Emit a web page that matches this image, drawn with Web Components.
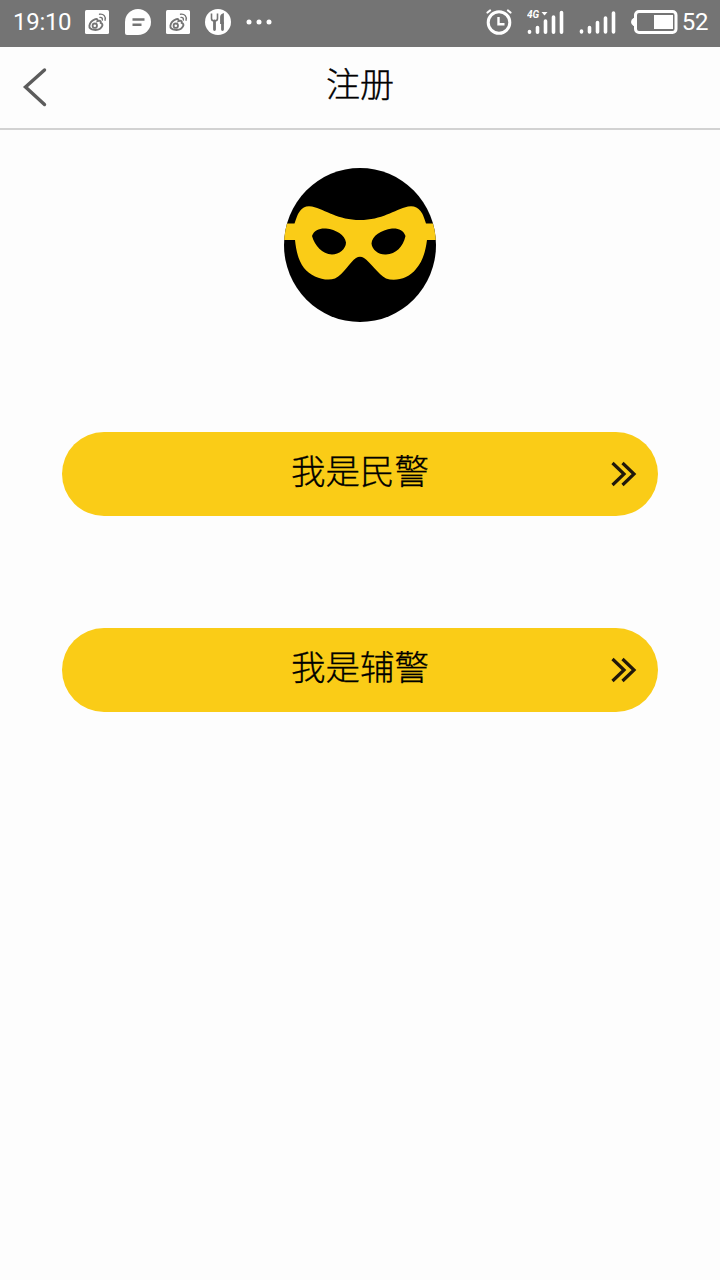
<!DOCTYPE html>
<html lang="zh-CN">
<head>
<meta charset="UTF-8">
<title>注册</title>
<style>
  body {
    margin: 0;
    background: #fdfdfd;
    color: #000;
    font-family: Roboto, "Noto Sans CJK SC", sans-serif;
  }
</style>
</head>
<body>
<register-page>
  <status-bar slot="status" time="19:10" battery="52"></status-bar>
  <nav-header slot="header">注册</nav-header>
  <mask-logo></mask-logo>
  <role-button>我是民警</role-button>
  <role-button>我是辅警</role-button>
</register-page>

<script>
class StatusBar extends HTMLElement {
  connectedCallback() {
    const weibo = `
      <svg class="weibo" width="24" height="24" viewBox="0 0 24 24">
        <rect width="24" height="24" rx="1.5" fill="#fff"/>
        <g fill="none" stroke="#747474">
          <path stroke-width="1.900" d="M9.800 9.300c1.800-.7 3.200-.3 2.600 1.900 2.200-.9 3.900-.2 3.300 1.600 1.800.8 2 2 1.500 3.100-1.200 2.800-4.700 4.300-8 4-3.200-.3-5.200-1.900-4.800-4.300.4-2.400 2.700-5.200 5.400-6.300z"/>
          <circle cx="9.800" cy="15.700" r="2.200" stroke-width="1.800"/>
          <path stroke-width="1.400" stroke-linecap="round" d="M14.500 4.200c4.200-.7 6.600 2.500 5.500 6M15 7.400c1.900-.2 2.700 1 2.300 2.600"/>
        </g>
      </svg>`;
    const shadow = this.attachShadow({ mode: 'open' });
    shadow.innerHTML = `
      <style>
        :host {
          display: flex;
          justify-content: space-between;
          box-sizing: border-box;
          height: 47px;
          padding: 0 12px 3px 13px;
          background: #747474;
          color: #fff;
          font: 24px/44px Roboto, sans-serif;
        }
        div { display: flex; align-items: center; }
        svg { display: block; flex: none; }
        .time { width: 72px; letter-spacing: -.3px; }
        .left svg { margin-right: 15px; }
        .left .weibo { margin-right: 16px; }
        .left .weibo ~ .weibo { margin-right: 15px; }
        .clock { margin-right: 14px; }
        .sim { margin-right: 15px; }
        .battery { margin-right: 4px; }
        .level { letter-spacing: -.4px; }
      </style>
      <div class="left">
        <span class="time">${this.getAttribute('time')}</span>
        ${weibo}
        <svg width="26" height="26" viewBox="0 0 26 26">
          <path fill="#fff" d="M13 0a13 13 0 0 1 0 26H2a2 2 0 0 1-2-2V13A13 13 0 0 1 13 0z"/>
          <path stroke="#747474" stroke-width="2.400" d="M7.500 10.500h12M7.500 15.800h9"/>
        </svg>
        ${weibo}
        <svg width="26" height="26" viewBox="0 0 26 26">
          <circle cx="13" cy="13" r="13" fill="#fff"/>
          <path fill="none" stroke="#747474" stroke-width="1.600" d="M6.500 4.500v5q0 2.500 3 2.500t3-2.500v-5"/>
          <path stroke="#747474" stroke-width="2.800" stroke-linecap="round" d="M9.500 12v8.500M17.500 14v6.500"/>
          <path fill="#747474" d="M18.900 4v11h-3.800V8q0-3 3.800-4z"/>
        </svg>
        <svg width="26" height="6" viewBox="0 0 26 6" fill="#fff">
          <circle cx="3" cy="3" r="2.500"/><circle cx="13" cy="3" r="2.500"/><circle cx="23" cy="3" r="2.500"/>
        </svg>
      </div>
      <div class="right">
        <svg class="clock" width="28" height="28" viewBox="0 0 28 28" fill="none" stroke="#fff">
          <circle cx="14" cy="14.500" r="10.800" stroke-width="3"/>
          <path stroke-width="2.400" d="M13.500 9v7.300h6"/>
          <path stroke-width="2.200" stroke-linecap="round" d="M2.500 4.500 5 2.500M25.500 4.500 23 2.500"/>
        </svg>
        <svg class="sim" width="37" height="26" viewBox="0 0 37 26">
          <path stroke="#fff" stroke-width="3.600" stroke-linecap="round" d="M2.500 22.500v.7M10.500 18.500v4.700M18.500 12v11.200M26.500 8v15.200M34.500 3.500v19.700"/>
          <text x="0" y="9" fill="#fff" font-size="10" font-weight="700" font-style="italic">4G</text>
          <path fill="#fff" d="M14.500 3h6l-3 3.500z"/>
        </svg>
        <svg class="sim" width="37" height="26" viewBox="0 0 37 26">
          <path stroke="#fff" stroke-width="3.600" stroke-linecap="round" d="M2.500 22v1M10.500 18.500v4.500M18.500 13.500v9.500M26.500 9v14M34.500 4v19"/>
        </svg>
        <svg class="battery" width="47" height="24" viewBox="0 0 47 24">
          <rect x="4.500" y="1.500" width="40.500" height="21" rx="3.500" fill="none" stroke="#fff" stroke-width="3"/>
          <path fill="#fff" d="M4 8v8H2.500Q0 14.500 0 12t2.500-4zM23 5h19v14H23z"/>
        </svg>
        <span class="level">${this.getAttribute('battery')}</span>
      </div>
    `;
  }
}

class NavHeader extends HTMLElement {
  connectedCallback() {
    const shadow = this.attachShadow({ mode: 'open' });
    shadow.innerHTML = `
      <style>
        :host {
          display: grid;
          grid-template-columns: 70px 1fr 70px;
          align-items: center;
          box-sizing: border-box;
          height: 83px;
          border-bottom: 2px solid #d2d2d2;
          background: #fdfdfd;
        }
        svg { display: block; margin: 0 0 2px 22px; }
        h1 {
          margin: 0;
          padding-bottom: 5px;
          font-size: 34px;
          font-weight: 300;
          line-height: 48px;
          text-align: center;
          -webkit-text-stroke: .4px currentColor;
        }
      </style>
      <svg width="28" height="40" viewBox="0 0 28 40">
        <path fill="none" stroke="#5c5c5c" stroke-width="3.400" stroke-linecap="round" d="M22.500 3 3.500 20 22.500 37.500"/>
      </svg>
      <h1><slot></slot></h1>
    `;
  }
}

class MaskLogo extends HTMLElement {
  connectedCallback() {
    const shadow = this.attachShadow({ mode: 'open' });
    shadow.innerHTML = `
      <style>
        :host { display: block; width: 152px; height: 154px; }
        svg { display: block; }
      </style>
      <svg width="152" height="154" viewBox="0 0 152 154">
        <defs><clipPath id="face"><ellipse cx="76" cy="77" rx="76" ry="77"/></clipPath></defs>
        <g clip-path="url(#face)">
          <rect width="152" height="154"/>
          <path fill="#facc17" d="M0 55.500H10.500C12.500 50 13 47 16 43Q20 37 28 38.500C42 42 54 52 76 52S110 42 124 38.500Q132 37 136.500 43C139.500 47 140 50 142 55.500H152V72H143C141.500 83 139 93 132 101C125 110 112 114 102 110.500C94 106 86 94 80 90Q76 87.500 72 90C66 94 60 106 51 110.500C42 114 27 109 20 100C14 92 12 82 11 72H0z"/>
          <path d="M28 68C30 62 36 60 42 60.500C52 61.500 61 67 62 74.500C62 81 55 86.500 48 86.500C38 86 31 78 28 68zM121.500 68C119.500 62 114 60 108 60.500C97 62 88 68 87.500 75.500C88 82 95 87 102 86.500C112 86 119 79 121.500 68z"/>
        </g>
      </svg>
    `;
  }
}

class RoleButton extends HTMLElement {
  connectedCallback() {
    const shadow = this.attachShadow({ mode: 'open' });
    shadow.innerHTML = `
      <style>
        :host { display: block; width: 596px; }
        button {
          display: grid;
          grid-template-columns: 47px 1fr 47px;
          align-items: center;
          width: 100%;
          height: 84px;
          padding: 0;
          border: 0;
          border-radius: 42px;
          background: #facc17;
          color: #000;
          font: inherit;
          font-size: 34.5px;
          font-weight: 300;
          line-height: 50px;
          -webkit-text-stroke: .3px currentColor;
        }
        span { grid-column: 2; padding-bottom: 4px; }
        svg { display: block; }
      </style>
      <button type="button">
        <span><slot></slot></span>
        <svg width="26" height="26" viewBox="0 0 26 26">
          <path fill="none" stroke="#21180a" stroke-width="3.200" d="M1.500 2 13 13 1.500 24M11.500 2 23 13 11.500 24"/>
        </svg>
      </button>
    `;
  }
}

class RegisterPage extends HTMLElement {
  connectedCallback() {
    const shadow = this.attachShadow({ mode: 'open' });
    shadow.innerHTML = `
      <style>
        :host { display: flex; flex-direction: column; min-height: 1280px; }
        main {
          display: flex;
          flex-direction: column;
          align-items: center;
          padding-top: 38px;
        }
        ::slotted(mask-logo) { margin-bottom: 110px; }
        ::slotted(role-button) { margin-bottom: 112px; }
      </style>
      <slot name="status"></slot>
      <slot name="header"></slot>
      <main><slot></slot></main>
    `;
  }
}

customElements.define('status-bar', StatusBar);
customElements.define('nav-header', NavHeader);
customElements.define('mask-logo', MaskLogo);
customElements.define('role-button', RoleButton);
customElements.define('register-page', RegisterPage);
</script>
</body>
</html>
